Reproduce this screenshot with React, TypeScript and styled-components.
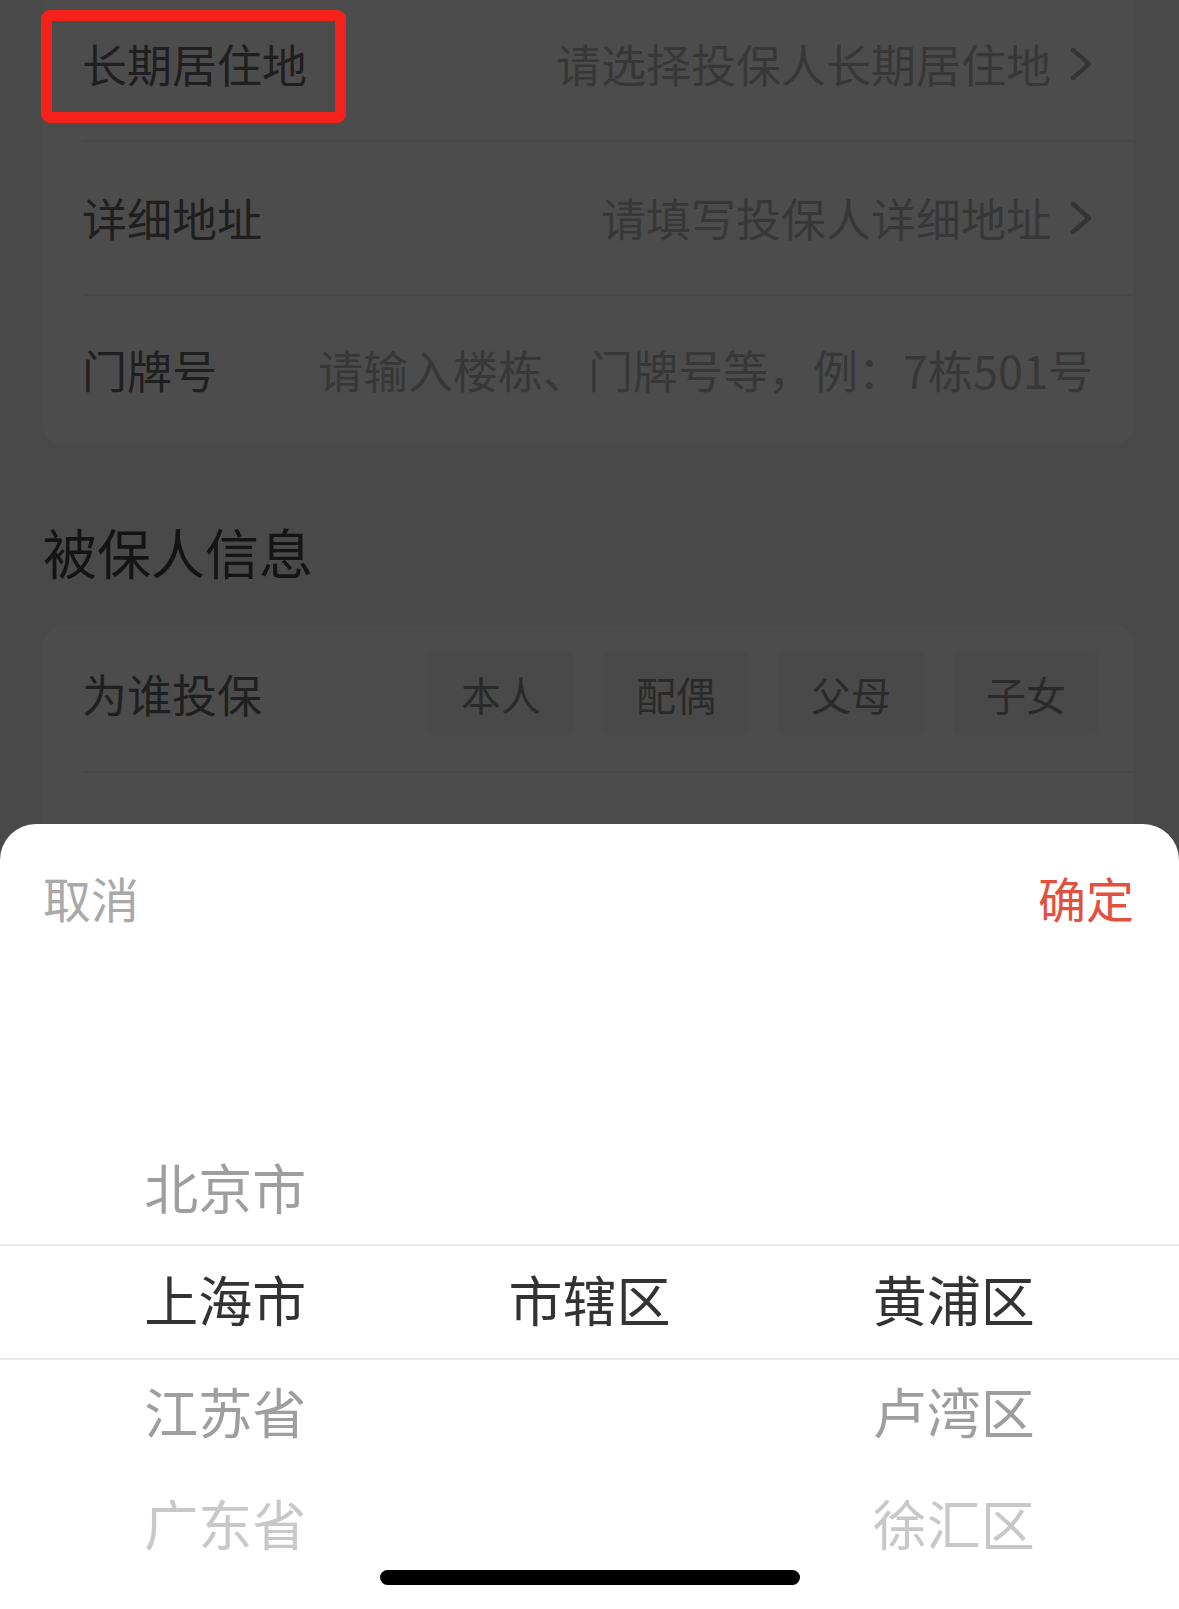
import React from "react";
import styled, { createGlobalStyle } from "styled-components";

const GlobalStyle = createGlobalStyle`
  html, body { margin: 0; padding: 0; }
  body {
    background: #f5f5f5;
    font-family: "Noto Sans CJK SC", "Noto Sans", sans-serif;
  }
  * { box-sizing: border-box; }
`;

const Screen = styled.div`
  position: relative;
  width: 1179px;
  height: 1609px;
  overflow: hidden;
  background: #f5f5f5;
`;

const Page = styled.div`
  margin-top: -12px;
  padding: 0 45px 0 43px;
`;

const Card = styled.div`
  background: #ffffff;
  border-radius: 20px;
`;

const FieldRow = styled.div<{ $h: number; $divider?: boolean; $padRight?: number; $padBottom?: number }>`
  position: relative;
  display: flex;
  align-items: center;
  justify-content: space-between;
  height: ${(p) => p.$h}px;
  margin-left: 39px;
  padding-right: ${(p) => p.$padRight ?? 41}px;
  padding-bottom: ${(p) => p.$padBottom ?? 0}px;
  border-bottom: ${(p) => (p.$divider ? "2px solid #efefef" : "none")};
`;

const Label = styled.span`
  font-size: 45px;
  line-height: 56px;
  color: #6a6a6a;
  white-space: nowrap;
`;

const Placeholder = styled.span`
  display: flex;
  align-items: center;
  gap: 18px;
  font-size: 45px;
  line-height: 56px;
  color: #b9b9b9;
  white-space: nowrap;
`;

const Highlight = styled.div`
  position: absolute;
  left: -41px;
  top: 22px;
  width: 305px;
  height: 113px;
  border: 11px solid #f5221b;
  border-radius: 9px;
  z-index: 20;
`;

const SectionTitle = styled.h2`
  margin: 0;
  padding: 80px 0 46px;
  font-size: 54px;
  line-height: 56px;
  font-weight: 400;
  color: #444444;
`;

const Options = styled.div`
  display: flex;
  gap: 25px;
`;

const OptionButton = styled.div`
  display: flex;
  align-items: center;
  justify-content: center;
  width: 150px;
  height: 88px;
  border-radius: 8px;
  background: #f4f4f4;
  border: 3px solid #fbfbfb;
  font-size: 40px;
  color: #8e8e8e;
`;

const Mask = styled.div`
  position: absolute;
  inset: 0;
  background: rgba(0, 0, 0, 0.7);
  z-index: 10;
`;

const Sheet = styled.div`
  position: absolute;
  left: 0;
  right: 0;
  bottom: 0;
  height: 785px;
  background: #ffffff;
  border-radius: 36px 36px 0 0;
  overflow: hidden;
  z-index: 30;
`;

const SheetHeader = styled.div`
  display: flex;
  align-items: center;
  justify-content: space-between;
  height: 146px;
  padding: 0 45px 0 43px;
`;

const HeaderAction = styled.span<{ $primary?: boolean }>`
  font-size: 48px;
  line-height: 60px;
  color: ${(p) => (p.$primary ? "#e2513f" : "#a9a9a9")};
`;

const Picker = styled.div`
  position: relative;
  display: flex;
  height: 639px;
  padding: 0 43px;
  overflow: hidden;
`;

const PickerColumn = styled.div`
  flex: 1;
  display: flex;
  flex-direction: column;
  align-items: center;
`;

const PickerItem = styled.div<{ $dist: number }>`
  height: 112px;
  line-height: 112px;
  font-size: 54px;
  white-space: nowrap;
  color: ${(p) =>
    p.$dist === 0 ? "#333333" : p.$dist === 1 ? "#9e9e9e" : p.$dist === 2 ? "#c8c8c8" : "#dddddd"};
`;

const SelectionBand = styled.div`
  position: absolute;
  left: 0;
  right: 0;
  top: 274px;
  height: 116px;
  border-top: 2px solid #ebebeb;
  border-bottom: 2px solid #ebebeb;
  pointer-events: none;
`;

const HomeIndicator = styled.div`
  position: absolute;
  left: 50%;
  bottom: 24px;
  width: 420px;
  height: 15px;
  margin-left: -210px;
  border-radius: 8px;
  background: #000000;
  z-index: 40;
`;

const Chevron = () => (
  <svg width="24" height="36" viewBox="0 0 24 36" fill="none">
    <path d="M4 4 L20 18 L4 32" stroke="#adadad" strokeWidth="4.4" strokeLinecap="round" strokeLinejoin="round" />
  </svg>
);

const ROW = 112;
const CENTER_TOP = 273;

const columns: { items: string[]; selected: number }[] = [
  { items: ["北京市", "上海市", "江苏省", "广东省"], selected: 1 },
  { items: ["市辖区"], selected: 0 },
  { items: ["黄浦区", "卢湾区", "徐汇区"], selected: 0 },
];

export default function App() {
  return (
    <>
      <GlobalStyle />
      <Screen>
        <Page>
          <Card>
            <FieldRow $h={154} $divider>
              <Label>长期居住地</Label>
              <Highlight />
              <Placeholder>
                请选择投保人长期居住地
                <Chevron />
              </Placeholder>
            </FieldRow>
            <FieldRow $h={154} $divider>
              <Label>详细地址</Label>
              <Placeholder>
                请填写投保人详细地址
                <Chevron />
              </Placeholder>
            </FieldRow>
            <FieldRow $h={148}>
              <Label>门牌号</Label>
              <Placeholder>请输入楼栋、门牌号等，例：7栋501号</Placeholder>
            </FieldRow>
          </Card>

          <SectionTitle>被保人信息</SectionTitle>

          <Card>
            <FieldRow $h={147} $divider $padRight={33} $padBottom={10}>
              <Label>为谁投保</Label>
              <Options>
                {["本人", "配偶", "父母", "子女"].map((o) => (
                  <OptionButton key={o}>{o}</OptionButton>
                ))}
              </Options>
            </FieldRow>
            <FieldRow $h={150} />
          </Card>
        </Page>

        <Mask />

        <Sheet>
          <SheetHeader>
            <HeaderAction>取消</HeaderAction>
            <HeaderAction $primary>确定</HeaderAction>
          </SheetHeader>
          <Picker>
            {columns.map((col, ci) => (
              <PickerColumn key={ci} style={{ transform: `translateY(${CENTER_TOP - col.selected * ROW}px)` }}>
                {col.items.map((it, i) => (
                  <PickerItem key={it} $dist={Math.abs(i - col.selected)}>
                    {it}
                  </PickerItem>
                ))}
              </PickerColumn>
            ))}
            <SelectionBand />
          </Picker>
          <HomeIndicator />
        </Sheet>
      </Screen>
    </>
  );
}
